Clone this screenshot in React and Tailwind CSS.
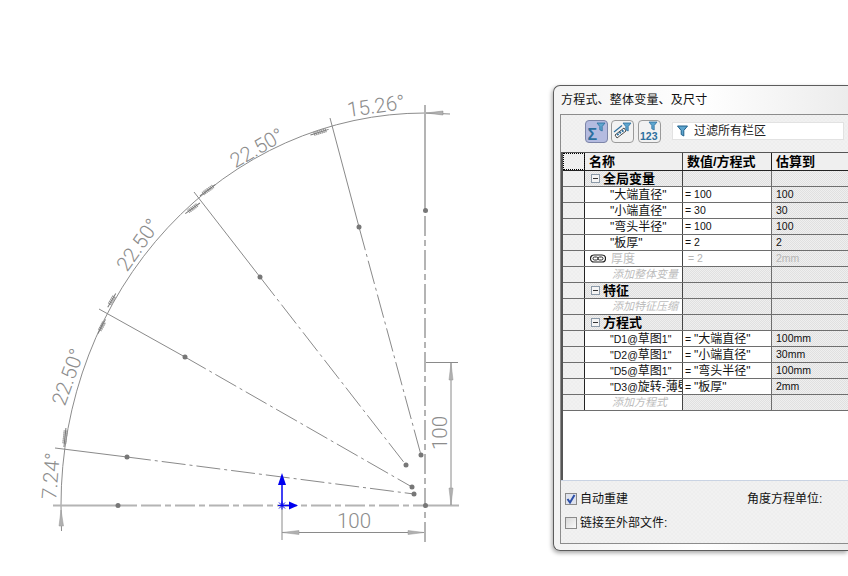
const sans = "font-['Liberation_Sans','Noto_Sans_CJK_SC',sans-serif]";
const grayCell =
  "bg-[repeating-conic-gradient(#e0e0e0_0_25%,#efefef_0_50%)] bg-[length:2px_2px]";
const panelBg =
  "bg-[repeating-conic-gradient(#eeeeee_0_25%,#f1f1f1_0_50%)] bg-[length:4px_4px]";

const thin = "24 4 3 4";
const thick = "20 4 6 4";

// solid part, then the centre-line part
const spokes = [
  { a: [55, 448], d: [127, 457], b: [414, 494] },
  { a: [99, 309], d: [185, 357], b: [412, 487] },
  { a: [194, 192], d: [260, 277], b: [406, 465] },
  { a: [330, 118], d: [359, 227], b: [421, 455] },
];

const labels = [
  { t: "15.26°", x: 376, y: 106, r: -8 },
  { t: "22.50°", x: 257, y: 148, r: -30 },
  { t: "22.50°", x: 138, y: 245, r: -55 },
  { t: "22.50°", x: 68, y: 377, r: -70 },
  { t: "7.24°", x: 51, y: 476, r: -85 },
  { t: "100", x: 354, y: 521, r: 0 },
  { t: "100", x: 440, y: 433, r: -90 },
];

// the little hatched arrowheads on the arc
const ticks = [
  { x: 320, y: 132, r: -17, l: 12 },
  { x: 208, y: 190, r: -36, l: 12 },
  { x: 193, y: 208, r: -36, l: 11 },
  { x: 112, y: 300, r: -60, l: 9 },
  { x: 102, y: 326, r: -62, l: 9 },
  { x: 65, y: 437, r: -84, l: 12 },
];

function Tick({ x, y, r, l }) {
  const hatch = [];
  for (let i = 0; i <= l; i += 2) {
    hatch.push(`M${x - l / 2 + i} ${y - 2} V${y + 2}`);
  }
  return (
    <g transform={`rotate(${r} ${x} ${y})`}>
      <path d={hatch.join(" ")} stroke="#8a8a8a" strokeWidth="0.8" />
      <path d={`M${x - l / 2 - 4} ${y} H${x + l / 2 + 3}`} stroke="#777" />
      <path d={`M${x - l / 2} ${y - 1.5} H${x + l / 2} M${x - l / 2} ${y + 1.5} H${x + l / 2}`} stroke="#999" strokeWidth="0.6" />
    </g>
  );
}

function Drawing() {
  return (
    <svg className="absolute inset-0" width="848" height="576" viewBox="0 0 848 576" fill="none">
      {/* arc */}
      <path d="M61.5 531 L61 505 A364 392 0 0 1 425 113 L450 114" stroke="#8c8c8c" />

      {/* spokes */}
      {spokes.map((s, i) => (
        <g key={i}>
          <line x1={s.a[0]} y1={s.a[1]} x2={s.d[0]} y2={s.d[1]} stroke="#8a8a8a" />
          <line x1={s.d[0]} y1={s.d[1]} x2={s.b[0]} y2={s.b[1]} stroke="#8a8a8a" strokeDasharray={thin} />
          <circle cx={s.d[0]} cy={s.d[1]} r="2.5" fill="#777" />
          <circle cx={s.b[0]} cy={s.b[1]} r="2.5" fill="#777" />
        </g>
      ))}

      {/* construction axes */}
      <line x1="53" y1="505.5" x2="137" y2="505.5" stroke="#b4b4b4" strokeWidth="2" />
      <line x1="141" y1="505.5" x2="425" y2="505.5" stroke="#b4b4b4" strokeWidth="2" strokeDasharray={thick} />
      <line x1="425" y1="505.5" x2="459" y2="505.5" stroke="#b4b4b4" strokeWidth="2" />
      <line x1="425" y1="105" x2="425" y2="210" stroke="#b4b4b4" strokeWidth="2" />
      <line x1="425" y1="216" x2="425" y2="545" stroke="#b4b4b4" strokeWidth="2" strokeDasharray={thick} />
      <circle cx="118" cy="505.5" r="2.5" fill="#777" />
      <circle cx="425.5" cy="505.5" r="2.5" fill="#777" />
      <circle cx="425.5" cy="210.5" r="2.5" fill="#777" />

      {/* dimension 100, horizontal */}
      <path d="M282 506 V540 M282 532.5 H424" stroke="#8a8a8a" />
      <path d="M282 532.5 L299 530.5 V534.5 Z M424 532.5 L408 530.5 V534.5 Z" fill="#b0b0b0" stroke="#999" strokeWidth="0.5" />

      {/* dimension 100, vertical */}
      <path d="M426 362.5 H458 M451 362 V505" stroke="#8a8a8a" />
      <path d="M451 363 L449 380 H453 Z M451 505 L449 488 H453 Z" fill="#b0b0b0" stroke="#999" strokeWidth="0.5" />

      {/* arc arrowheads */}
      {ticks.map((t, i) => (
        <Tick key={i} {...t} />
      ))}
      <path d="M61 510 L59 526 H63.5 Z" fill="#b0b0b0" stroke="#999" strokeWidth="0.5" />
      <path d="M426 113 L443 111 V115 Z" fill="#b0b0b0" stroke="#888" strokeWidth="0.5" />

      {/* dimension texts */}
      {labels.map((l, i) => (
        <text
          key={i}
          x={l.x}
          y={l.y}
          transform={`rotate(${l.r} ${l.x} ${l.y})`}
          textAnchor="middle"
          dominantBaseline="central"
          fontFamily="Roboto, 'Liberation Sans', sans-serif"
          fontWeight="300"
          fontSize="20.5"
          fill="#8c8c8c"
        >
          {l.t}
        </text>
      ))}

      {/* origin */}
      <path d="M282 505 V480" stroke="#0000f0" strokeWidth="1.5" />
      <path d="M282 473 L278 485 H286 Z" fill="#0000f0" />
      <path d="M282 505.5 H290" stroke="#0000f0" strokeWidth="1.5" />
      <path d="M298 505.5 L289 501.5 V509.5 Z" fill="#0000f0" />
      <path d="M278 505.5 H286 M282 501.5 V509.5 M279 502.5 L285 508.5 M285 502.5 L279 508.5" stroke="#0000f0" />
    </svg>
  );
}

function Funnel({ x, y }) {
  return <path transform={`translate(${x} ${y})`} d="M0 0 H8 L5.2 3.5 V8 L2.8 6.8 V3.5 Z" fill="#5ea6cf" stroke="#2c6f9e" strokeWidth="0.8" />;
}

function ToolButton({ active, children, className = "" }) {
  return (
    <div
      className={`w-[23px] h-[23px] rounded-[4px] border ${
        active ? "bg-[#b4bbe0] border-[#7d85a8]" : "bg-[#f2f2f2] border-[#9a9a9a]"
      } ${className}`}
    >
      <svg width="21" height="21" viewBox="0 0 21 21" fill="none">
        {children}
      </svg>
    </div>
  );
}

function MinusBox() {
  return (
    <span className="w-[9px] h-[9px] border border-[#8c9aa8] bg-[#f4f4f4] flex items-center justify-center shrink-0">
      <span className="w-[5px] h-px bg-[#333]" />
    </span>
  );
}

function LinkIcon() {
  return (
    <svg width="16" height="9" viewBox="0 0 16 9" fill="none" className="shrink-0">
      <rect x="0.5" y="1" width="15" height="7" rx="3.5" stroke="#222" strokeWidth="1.2" />
      <rect x="3" y="3" width="5" height="3" rx="1.5" stroke="#222" />
      <rect x="8" y="3" width="5" height="3" rx="1.5" stroke="#222" />
    </svg>
  );
}

// chinese text stays at 12px while the latin part of a cell is narrower
function Zh({ children }) {
  return <span className="text-[12px]">{children}</span>;
}

function Row({ name, value, result, muted, gray, nameClass = "", icon, group, header, selected }) {
  const h = header ? "h-[18px] border-b-[#222]" : "h-4 border-b-[#6e6e6e]";
  const valueBg = gray || group ? grayCell : "bg-white";
  const bold = "text-[13px] font-bold text-black";
  return (
    <div className={`flex ${h} border-b leading-none whitespace-nowrap text-[10.5px]`}>
      <div
        className={`w-[22px] shrink-0 border-r border-r-[#222] ${panelBg} ${
          selected ? "outline-1 outline-dotted outline-black -outline-offset-1" : ""
        }`}
      />
      <div
        className={`w-[98px] shrink-0 border-r border-r-[#444] flex items-center overflow-hidden ${
          group ? `${grayCell} pl-[6px] gap-[3px] ${bold}` : header ? `bg-[#efefef] pl-1 ${bold}` : "bg-white"
        } ${nameClass}`}
      >
        {group && <MinusBox />}
        {icon}
        <span>{name}</span>
      </div>
      <div
        className={`w-[89px] shrink-0 border-r flex items-center overflow-hidden ${
          header ? `bg-[#efefef] pl-[4px] border-r-[#222] ${bold}` : `${valueBg} border-r-[#6e6e6e] pl-[2px]`
        } ${muted ? "text-[#b5b5b5] pl-[5px]" : ""}`}
      >
        <span>{value}</span>
      </div>
      <div
        className={`flex-1 flex items-center pl-[4px] ${header ? `bg-[#efefef] ${bold}` : grayCell} ${
          muted ? "text-[#b5b5b5]" : ""
        }`}
      >
        {result}
      </div>
    </div>
  );
}

const varName = "pl-[25px]";
const addName = "pl-[27px] italic text-[#bcbcbc] text-[11px]";

export default function App() {
  return (
    <div className={`relative w-[848px] h-[576px] overflow-hidden bg-white text-[12px] text-[#111] ${sans}`}>
      <Drawing />

      {/* equations window */}
      <div className="absolute left-[553px] top-[85px] w-[295px] h-[466px] flex flex-col rounded-l-[7px] border border-r-0 border-[#5c5c5c] bg-gradient-to-r from-[#f3f3f3] via-white to-[#ececec] pl-[6px] pb-[6px] shadow-[-1px_2px_4px_rgba(0,0,0,0.35)]">
        <div className="h-[28px] shrink-0 flex items-center pl-px text-[12px] tracking-[0.2px] text-[#111]">
          方程式、整体变量、及尺寸
        </div>

        <div className={`flex-1 flex flex-col border-l border-t border-b border-[#8c8c8c] ${panelBg}`}>
          {/* toolbar */}
          <div className="h-[37px] shrink-0 flex items-start pt-[5px] pl-[24px]">
            <div className="flex">
              <ToolButton active>
                <text x="1.5" y="18.5" fontFamily="'Liberation Sans', sans-serif" fontWeight="700" fontSize="16" fill="#2c6f9e">
                  Σ
                </text>
                <Funnel x="11" y="2" />
              </ToolButton>
              <ToolButton className="ml-[3px]">
                <path d="M3 14 L12 7 L14 10 L5 17 Z" fill="#fff" stroke="#222" strokeWidth="0.8" />
                <path d="M5 14 L12 9" stroke="#2c6f9e" strokeWidth="2" strokeDasharray="2 1" />
                <path d="M2 11 L10 4.5" stroke="#2c6f9e" strokeWidth="1.2" />
                <Funnel x="11" y="2" />
              </ToolButton>
              <ToolButton className="ml-[4px]">
                <text x="1" y="19" fontFamily="'Liberation Sans', sans-serif" fontWeight="700" fontSize="10.5" fill="#2c6f9e">
                  123
                </text>
                <Funnel x="10" y="1" />
              </ToolButton>
            </div>
            <div className="ml-[11px] mt-[2px] w-[172px] h-[18px] bg-white border border-[#e2e2e2] flex items-center pl-[4px] gap-[6px]">
              <svg width="11" height="12" viewBox="0 0 11 12" fill="none">
                <path d="M0.5 1 H10.5 L6.8 5.5 V11 L4.2 9.5 V5.5 Z" fill="#5ea6cf" stroke="#1f5f8a" />
              </svg>
              <span className="text-[#222]">过滤所有栏区</span>
            </div>
          </div>

          {/* table */}
          <div className="flex-1 flex flex-col bg-white border-l-2 border-t border-l-[#555] border-t-[#555]">
            <Row header selected name="名称" value="数值/方程式" result="估算到" />
            <Row group name="全局变量" />
            <Row name={<Zh>"大端直径"</Zh>} nameClass={varName} value="= 100" result="100" />
            <Row name={<Zh>"小端直径"</Zh>} nameClass={varName} value="= 30" result="30" />
            <Row name={<Zh>"弯头半径"</Zh>} nameClass={varName} value="= 100" result="100" />
            <Row name={<Zh>"板厚"</Zh>} nameClass={varName} value="= 2" result="2" />
            <Row muted name={<Zh>厚度</Zh>} icon={<LinkIcon />} nameClass="pl-[5px] gap-[5px] text-[#bcbcbc]" value="= 2" result="2mm" />
            <Row gray name="添加整体变量" nameClass={addName} />
            <Row group name="特征" />
            <Row gray name="添加特征压缩" nameClass={addName} />
            <Row group name="方程式" />
            <Row name={<>"D1@<Zh>草图</Zh>1"</>} nameClass={varName} value={<>= <Zh>"大端直径"</Zh></>} result="100mm" />
            <Row name={<>"D2@<Zh>草图</Zh>1"</>} nameClass={varName} value={<>= <Zh>"小端直径"</Zh></>} result="30mm" />
            <Row name={<>"D5@<Zh>草图</Zh>1"</>} nameClass={varName} value={<>= <Zh>"弯头半径"</Zh></>} result="100mm" />
            <Row name={<>"D3@<Zh>旋转-薄壁</Zh>1"</>} nameClass={varName} value={<>= <Zh>"板厚"</Zh></>} result="2mm" />
            <Row gray name="添加方程式" nameClass={addName} />
          </div>

          {/* options */}
          <div className={`h-[63px] shrink-0 border-t border-[#c9d3e3] flex flex-col pl-[4px] pt-[12px] gap-[12px] ${panelBg}`}>
            <div className="flex items-center h-[12px]">
              <span className="w-[12px] h-[12px] border border-[#8a8a8a] bg-[#dfe3ee] flex items-center justify-center">
                <svg width="10" height="10" viewBox="0 0 10 10" fill="none">
                  <path d="M1.5 5 L4 8.5 L8.5 1" stroke="#2c4fa8" strokeWidth="2" />
                </svg>
              </span>
              <span className="ml-[3px] w-[167px]">自动重建</span>
              <span>角度方程单位:</span>
            </div>
            <div className="flex items-center h-[12px]">
              <span className="w-[12px] h-[12px] border border-[#8a8a8a] bg-gradient-to-br from-[#d8d8d8] to-[#fafafa]" />
              <span className="ml-[3px]">链接至外部文件:</span>
            </div>
          </div>
        </div>
      </div>
    </div>
  );
}
